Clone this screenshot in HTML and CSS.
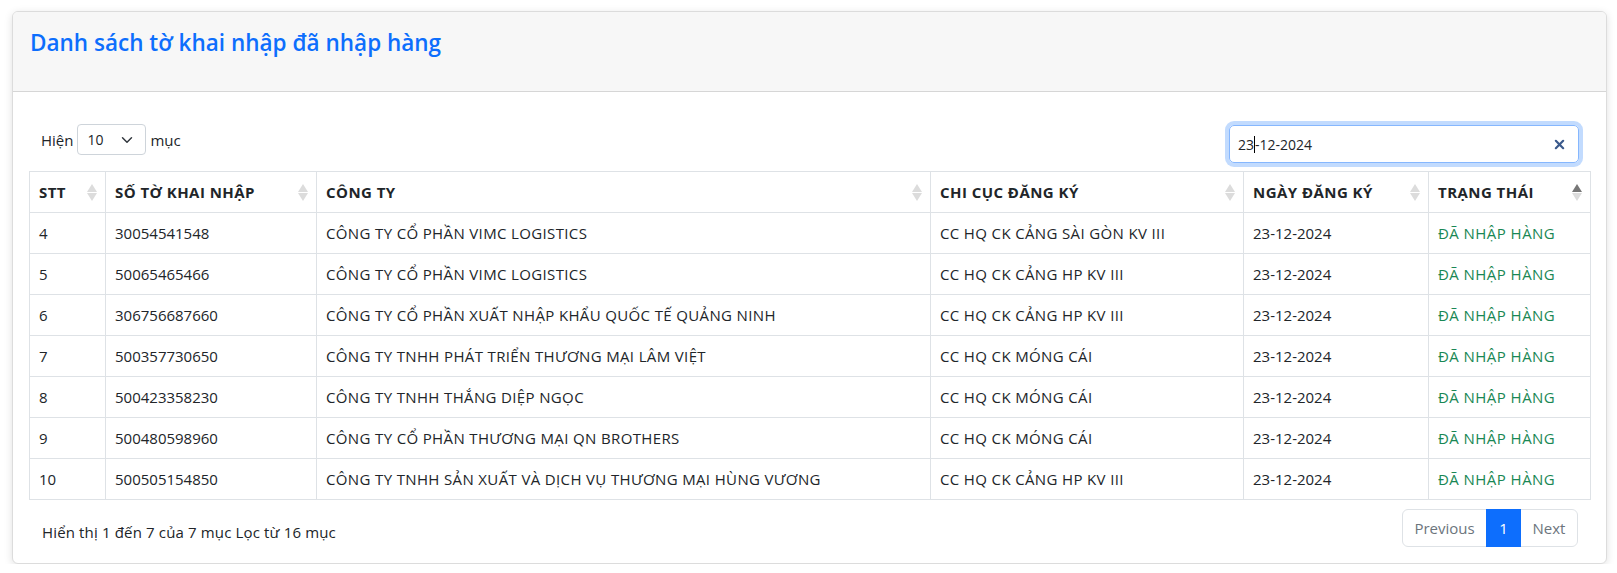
FILE: index.html
```html
<!DOCTYPE html>
<html lang="vi">
<head>
<meta charset="utf-8">
<title>Danh sách tờ khai nhập đã nhập hàng</title>
<link rel="stylesheet" href="styles.css">
</head>
<body>
<div class="card">
  <div class="card-header">
    <h4 class="card-title">Danh sách tờ khai nhập đã nhập hàng</h4>
  </div>
  <div class="card-body">
    <div class="toolbar">
      <div class="length">
        <span>Hiện</span>
        <div class="select"><span>10</span>
          <svg width="12" height="12" viewBox="0 0 16 16"><path d="M2 5l6 6 6-6" fill="none" stroke="#343a40" stroke-width="2" stroke-linecap="round" stroke-linejoin="round"/></svg>
        </div>
        <span>mục</span>
      </div>
      <div class="search">
        <span class="search-text">23<span class="caret"></span>-12-2024</span>
        <svg class="clear" width="11" height="11" viewBox="0 0 12 12"><path d="M2 2l8 8M10 2l-8 8" stroke="#3b5a8c" stroke-width="2.4" stroke-linecap="round"/></svg>
      </div>
    </div>
    <table class="grid">
      <colgroup>
        <col class="c1"><col class="c2"><col class="c3"><col class="c4"><col class="c5"><col class="c6">
      </colgroup>
      <thead>
        <tr>
          <th><span>STT</span><i class="sort"></i></th>
          <th><span>SỐ TỜ KHAI NHẬP</span><i class="sort"></i></th>
          <th><span>CÔNG TY</span><i class="sort"></i></th>
          <th><span>CHI CỤC ĐĂNG KÝ</span><i class="sort"></i></th>
          <th><span>NGÀY ĐĂNG KÝ</span><i class="sort"></i></th>
          <th><span>TRẠNG THÁI</span><i class="sort asc"></i></th>
        </tr>
      </thead>
      <tbody>
        <tr><td>4</td><td>30054541548</td><td>CÔNG TY CỔ PHẦN VIMC LOGISTICS</td><td>CC HQ CK CẢNG SÀI GÒN KV III</td><td>23-12-2024</td><td class="ok">ĐÃ NHẬP HÀNG</td></tr>
        <tr><td>5</td><td>50065465466</td><td>CÔNG TY CỔ PHẦN VIMC LOGISTICS</td><td>CC HQ CK CẢNG HP KV III</td><td>23-12-2024</td><td class="ok">ĐÃ NHẬP HÀNG</td></tr>
        <tr><td>6</td><td>306756687660</td><td>CÔNG TY CỔ PHẦN XUẤT NHẬP KHẨU QUỐC TẾ QUẢNG NINH</td><td>CC HQ CK CẢNG HP KV III</td><td>23-12-2024</td><td class="ok">ĐÃ NHẬP HÀNG</td></tr>
        <tr><td>7</td><td>500357730650</td><td>CÔNG TY TNHH PHÁT TRIỂN THƯƠNG MẠI LÂM VIỆT</td><td>CC HQ CK MÓNG CÁI</td><td>23-12-2024</td><td class="ok">ĐÃ NHẬP HÀNG</td></tr>
        <tr><td>8</td><td>500423358230</td><td>CÔNG TY TNHH THẮNG DIỆP NGỌC</td><td>CC HQ CK MÓNG CÁI</td><td>23-12-2024</td><td class="ok">ĐÃ NHẬP HÀNG</td></tr>
        <tr><td>9</td><td>500480598960</td><td>CÔNG TY CỔ PHẦN THƯƠNG MẠI QN BROTHERS</td><td>CC HQ CK MÓNG CÁI</td><td>23-12-2024</td><td class="ok">ĐÃ NHẬP HÀNG</td></tr>
        <tr><td>10</td><td>500505154850</td><td>CÔNG TY TNHH SẢN XUẤT VÀ DỊCH VỤ THƯƠNG MẠI HÙNG VƯƠNG</td><td>CC HQ CK CẢNG HP KV III</td><td>23-12-2024</td><td class="ok">ĐÃ NHẬP HÀNG</td></tr>
      </tbody>
    </table>
    <div class="footer">
      <div class="info">Hiển thị 1 đến 7 của 7 mục Lọc từ 16 mục</div>
      <ul class="pager">
        <li class="pg disabled">Previous</li>
        <li class="pg active">1</li>
        <li class="pg disabled">Next</li>
      </ul>
    </div>
  </div>
</div>
</body>
</html>
```
FILE: styles.css
```css
html, body {
  margin: 0;
  padding: 0;
  background: #ffffff;
}
body {
  padding: 11px 10px 0 12px;
  font-family: "Open Sans", "Noto Sans", sans-serif;
  font-size: 15px;
  color: #212529;
}
.card {
  border: 1px solid #dcdcdc;
  border-radius: 6px;
  box-shadow: 0 2px 8px rgba(0,0,0,0.12);
  background: #fff;
  overflow: hidden;
}
.card-header {
  background: #f7f7f7;
  border-bottom: 1px solid #d6d6d6;
  height: 80px;
  box-sizing: border-box;
  padding: 15px 17px;
}
.card-title {
  margin: 0;
  font-size: 22.5px;
  font-weight: 600;
  color: #0d6efd;
  line-height: 32px;
}
.card-body {
  padding: 32px 16px 16px 16px;
}
.toolbar {
  display: flex;
  justify-content: space-between;
  align-items: flex-start;
  height: 47px;
}
.length {
  display: flex;
  align-items: center;
  gap: 4px;
  padding-left: 12px;
}
.select {
  display: flex;
  align-items: center;
  justify-content: space-between;
  width: 69px;
  height: 31px;
  box-sizing: border-box;
  border: 1px solid #ced4da;
  border-radius: 4px;
  padding: 0 12px 0 9px;
  font-size: 14px;
}
.search {
  margin-top: 1px;
  margin-right: 11px;
  width: 350px;
  height: 38px;
  box-sizing: border-box;
  border: 1px solid #86b7fe;
  border-radius: 5px;
  box-shadow: 0 0 0 4px rgba(13,110,253,0.25);
  display: flex;
  align-items: center;
  justify-content: space-between;
  padding: 0 13px 0 8px;
  font-size: 14px;
}
.caret {
  display: inline-block;
  width: 1px;
  height: 17px;
  background: #000;
  vertical-align: -3px;
}
.grid {
  width: 100%;
  border-collapse: collapse;
  table-layout: fixed;
}
.c1 { width: 76px; }
.c2 { width: 211px; }
.c3 { width: 614px; }
.c4 { width: 313px; }
.c5 { width: 185px; }
.c6 { width: 162px; }
.grid th, .grid td {
  border: 1px solid #dee2e6;
  padding: 8px 9px;
  text-align: left;
  line-height: 24px;
  white-space: nowrap;
}
.grid th {
  font-weight: 700;
  position: relative;
  height: 23px;
  letter-spacing: 0.45px;
}
.grid td {
  height: 24px;
}
.grid td:nth-child(3),
.grid td:nth-child(4) {
  letter-spacing: 0.36px;
}
.grid td:nth-child(6) {
  letter-spacing: 0.45px;
}
.sort {
  position: absolute;
  right: 8px;
  top: 12px;
  width: 10px;
  height: 17px;
}
.sort::before, .sort::after {
  content: "";
  position: absolute;
  left: 0;
  border-left: 5px solid transparent;
  border-right: 5px solid transparent;
}
.sort::before {
  top: 0;
  border-bottom: 8px solid #dcdcdc;
}
.sort::after {
  bottom: 0;
  border-top: 8px solid #dcdcdc;
}
.sort.asc::before {
  border-bottom-color: #777;
}
.ok {
  color: #198754;
}
.footer {
  display: flex;
  justify-content: space-between;
  align-items: flex-start;
  margin-top: 9px;
}
.info {
  padding-left: 13px;
  padding-top: 13px;
  font-size: 15px;
  letter-spacing: 0.15px;
}
.pager {
  list-style: none;
  margin: 0 12px 0 0;
  padding: 0;
  display: flex;
  border: 1px solid #dee2e6;
  border-radius: 6px;
  height: 38px;
  box-sizing: border-box;
}
.pg {
  display: flex;
  align-items: center;
  justify-content: center;
  font-size: 15px;
  color: #6c757d;
}
.pg:first-child { width: 83px; }
.pg:last-child { width: 56px; }
.pg.active {
  width: 35px;
  background: #0d6efd;
  color: #fff;
  margin: -1px 0;
}
```
